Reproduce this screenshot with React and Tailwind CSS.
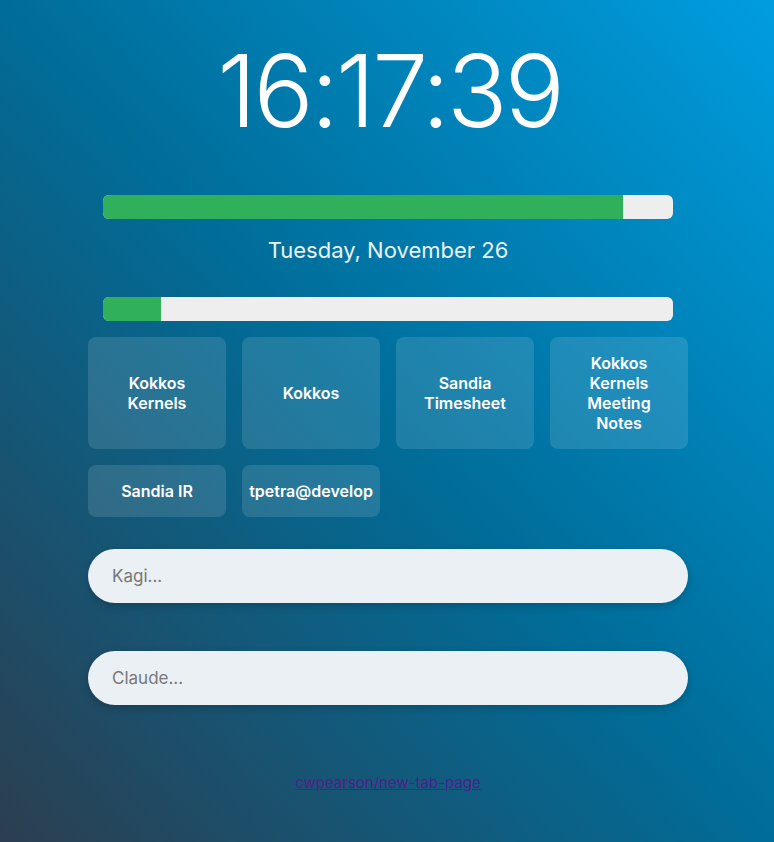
import React from "react";

const tiles = [
  "Kokkos Kernels",
  "Kokkos",
  "Sandia Timesheet",
  "Kokkos Kernels Meeting Notes",
];
const tiles2 = ["Sandia IR", "tpetra@develop"];

function Bar({ pct }) {
  return (
    <div className="mx-[15px] h-[24px] rounded-[6px] bg-[#eeeeee] overflow-hidden">
      <div className="h-full bg-[#30b05a]" style={{ width: pct + "%" }} />
    </div>
  );
}

export default function App() {
  return (
    <div className="min-h-[842px] w-full pl-[88px] bg-[linear-gradient(to_top_right,#2c3e50_0%,#006d99_50%,#009ddf_100%)] font-['Inter','Noto_Sans',sans-serif]">
      <div className="w-[600px] flex flex-col">
        <div className="mt-[41px] h-[100px] leading-[100px] text-[100px] font-light text-white text-center tracking-[-3px] pl-[3px]">
          16:17:39
        </div>
        <div className="mt-[54px]">
          <Bar pct={91.2} />
        </div>
        <div className="mt-[15px] h-[32px] leading-[32px] text-[22px] text-[#eaf2f8] text-center">
          Tuesday, November 26
        </div>
        <div className="mt-[31px]">
          <Bar pct={10.2} />
        </div>
        <div className="mt-[16px] grid grid-cols-4 gap-4">
          {tiles.map((t) => (
            <div
              key={t}
              className="h-[112px] rounded-[8px] bg-white/[0.12] flex items-center justify-center px-4 text-center text-white font-semibold text-[16px] leading-[20px]"
            >
              {t}
            </div>
          ))}
          {tiles2.map((t) => (
            <div
              key={t}
              className="h-[52px] rounded-[8px] bg-white/[0.12] flex items-center justify-center px-4 text-center text-white font-semibold text-[16px] leading-[20px]"
            >
              <span className="whitespace-nowrap">{t}</span>
            </div>
          ))}
        </div>
        <input
          className="mt-[32px] h-[54px] w-full rounded-full bg-[#ebf0f5] pl-[24px] text-[17px] text-[#333] placeholder:text-[#777] shadow-[0_3px_8px_rgba(0,0,0,0.2)] outline-none"
          placeholder="Kagi..."
        />
        <input
          className="mt-[48px] h-[54px] w-full rounded-full bg-[#ebf0f5] pl-[24px] text-[17px] text-[#333] placeholder:text-[#777] shadow-[0_3px_8px_rgba(0,0,0,0.2)] outline-none"
          placeholder="Claude..."
        />
        <div className="mt-[66px] h-[24px] leading-[24px] text-center text-[15px]">
          <a href="#" className="text-[#551a8b] underline">
            cwpearson/new-tab-page
          </a>
        </div>
      </div>
    </div>
  );
}
